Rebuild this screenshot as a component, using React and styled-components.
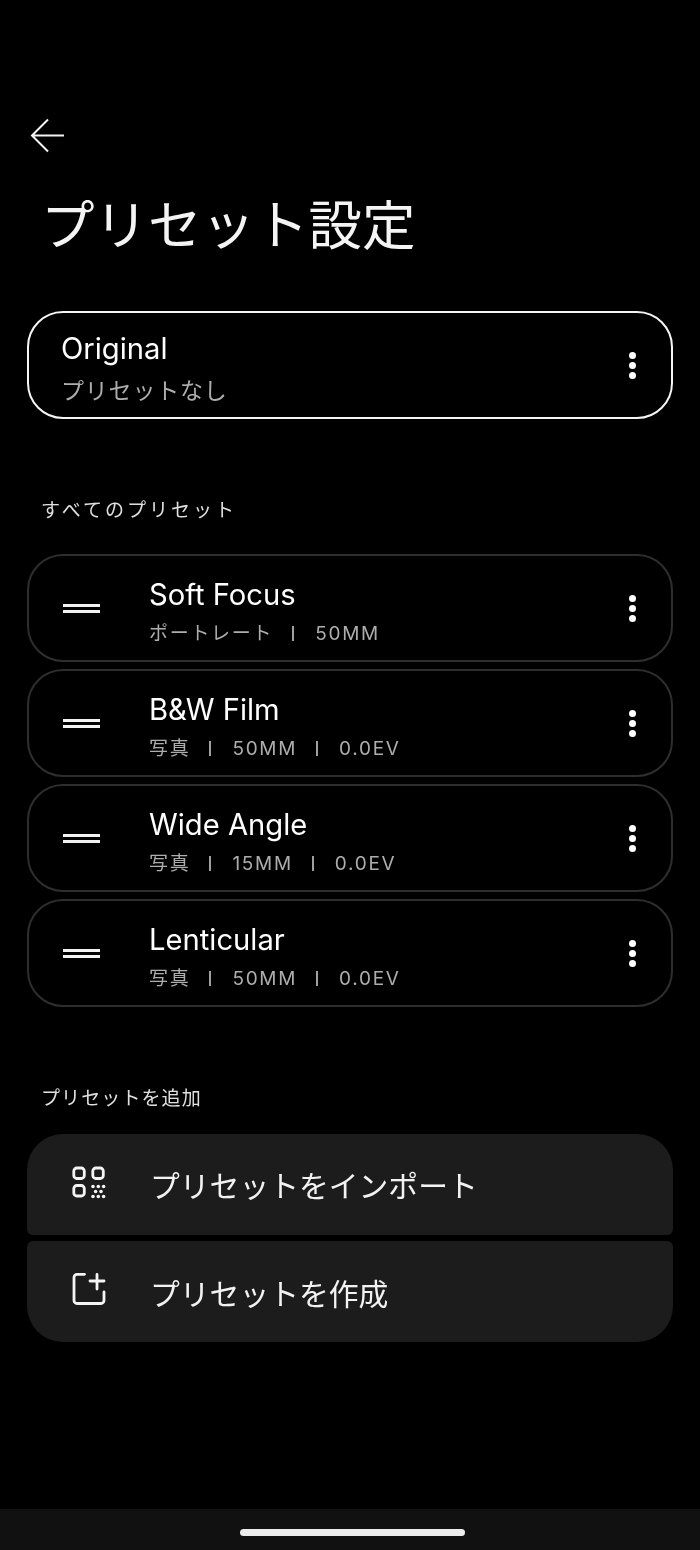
import styled, { createGlobalStyle } from "styled-components";

const GlobalStyle = createGlobalStyle`
  html, body {
    margin: 0;
    padding: 0;
    background: #000;
  }
  body {
    font-family: Inter, "Noto Sans CJK JP", sans-serif;
    color: #fff;
  }
`;

const Page = styled.div`
  width: 700px;
  height: 1550px;
  display: flex;
  flex-direction: column;
  background: #000;
  overflow: hidden;
`;

const Main = styled.main`
  flex: 1;
  padding: 118px 27px 0;
  display: flex;
  flex-direction: column;
  will-change: opacity;
`;

const BackButton = styled.div`
  width: 36px;
  height: 36px;
  margin-left: 3px;
  display: flex;
`;

const Title = styled.h1`
  margin: 39px 0 0 14px;
  font-size: 53.5px;
  line-height: 66px;
  font-weight: 400;
  color: #f4f4f4;
`;

const Card = styled.div`
  box-sizing: border-box;
  height: 108px;
  display: flex;
  align-items: center;
  border-radius: 36px;
  border: 2px solid ${(props) => (props.selected ? "#f5f5f5" : "#2e2e2e")};
  padding-left: ${(props) => (props.selected ? "32px" : "34px")};
  padding-right: 35px;
`;

const SelectedWrap = styled.div`
  margin-top: 52px;
`;

const Texts = styled.div`
  flex: 1;
  display: flex;
  flex-direction: column;
  padding-top: 5px;
`;

const Name = styled.div`
  font-size: 29.2px;
  line-height: 40px;
  font-weight: 400;
  color: #fff;
`;

const NoPreset = styled.div`
  margin-top: 7px;
  font-size: 23px;
  line-height: 30px;
  font-weight: 400;
  letter-spacing: 0.8px;
  color: #adadad;
`;

const SectionLabel = styled.div`
  margin: ${(props) => props.top}px 0 0 14px;
  font-size: 19px;
  line-height: 28px;
  font-weight: 400;
  letter-spacing: ${(props) => props.spacing}px;
  color: #e0e0e0;
`;

const List = styled.div`
  margin-top: 29px;
  display: flex;
  flex-direction: column;
  gap: 7px;
`;

const Handle = styled.div`
  width: 37px;
  height: 9px;
  margin-right: 49px;
  display: flex;
  flex-direction: column;
  justify-content: space-between;

  &::before,
  &::after {
    content: "";
    height: 3px;
    background: #f2f2f2;
  }
`;

const Meta = styled.div`
  margin-top: 6px;
  display: flex;
  align-items: center;
  font-size: 19px;
  line-height: 26px;
  font-weight: 400;
  letter-spacing: 1.7px;
  color: #adadad;
`;

const Divider = styled.span`
  width: 2px;
  height: 15px;
  margin: 0 21px 0 19px;
  background: #a0a0a0;
`;

const MetaItem = styled.span`
  display: contents;
`;

const Dots = styled.div`
  width: 7.500px;
  margin-top: 1px;
  display: flex;
  flex-direction: column;
  gap: 2.500px;

  span {
    width: 7.500px;
    height: 7.500px;
    border-radius: 50%;
    background: #fff;
  }
`;

const Actions = styled.div`
  margin-top: 21px;
  display: flex;
  flex-direction: column;
  gap: 6.800px;
`;

const Action = styled.div`
  height: 100.500px;
  display: flex;
  align-items: center;
  padding-left: 44px;
  background: #1c1c1c;
  border-radius: ${(props) =>
    props.last ? "6px 6px 36px 36px" : "36px 36px 6px 6px"};
`;

const ActionIcon = styled.svg`
  width: 36px;
  height: 36px;
  margin-right: 43px;
  margin-top: -4px;
  fill: none;
  stroke: #f4f4f4;
  stroke-width: 2.8;
`;

const ActionLabel = styled.div`
  font-size: 29.8px;
  font-weight: 400;
  color: #f2f2f2;
`;

const NavBar = styled.div`
  height: 41px;
  background: #111111;
  display: flex;
  justify-content: center;
  padding-top: 20px;
  box-sizing: border-box;
`;

const NavPill = styled.div`
  width: 225px;
  height: 7px;
  margin-left: 5px;
  border-radius: 4px;
  background: #ececec;
`;

const presets = [
  { name: "Soft Focus", meta: ["ポートレート", "50MM"] },
  { name: "B&W Film", meta: ["写真", "50MM", "0.0EV"] },
  { name: "Wide Angle", meta: ["写真", "15MM", "0.0EV"] },
  { name: "Lenticular", meta: ["写真", "50MM", "0.0EV"] },
];

function More() {
  return (
    <Dots>
      <span />
      <span />
      <span />
    </Dots>
  );
}

export default function App() {
  return (
    <>
      <GlobalStyle />
      <Page>
        <Main>
          <BackButton>
            <svg width="36" height="36" viewBox="0 0 36 36" fill="none" stroke="#f4f4f4" strokeWidth="2">
              <path d="M34 17.5H2M18 1.5L2 17.5L18 33.5" />
            </svg>
          </BackButton>
          <Title>プリセット設定</Title>

          <SelectedWrap>
            <Card selected>
              <Texts>
                <Name>Original</Name>
                <NoPreset>プリセットなし</NoPreset>
              </Texts>
              <More />
            </Card>
          </SelectedWrap>

          <SectionLabel top={78} spacing={3}>すべてのプリセット</SectionLabel>
          <List>
            {presets.map((preset) => (
              <Card key={preset.name}>
                <Handle />
                <Texts>
                  <Name>{preset.name}</Name>
                  <Meta>
                    {preset.meta.map((item, i) => (
                      <MetaItem key={item}>
                        {i > 0 && <Divider />}
                        {item}
                      </MetaItem>
                    ))}
                  </Meta>
                </Texts>
                <More />
              </Card>
            ))}
          </List>

          <SectionLabel top={78} spacing={1.1}>プリセットを追加</SectionLabel>
          <Actions>
            <Action>
              <ActionIcon viewBox="0 0 36 36">
                <rect x="2.800" y="4" width="10.500" height="10.500" rx="3" />
                <rect x="21.800" y="4" width="10.500" height="10.500" rx="3" />
                <rect x="2.800" y="21.500" width="10.500" height="10.500" rx="3" />
                <g fill="#f4f4f4" stroke="none">
                  <circle cx="22" cy="22.500" r="1.800" />
                  <circle cx="27.300" cy="22.500" r="1.800" />
                  <circle cx="32.600" cy="22.500" r="1.800" />
                  <circle cx="24.600" cy="27.500" r="1.800" />
                  <circle cx="30" cy="27.500" r="1.800" />
                  <circle cx="22" cy="32.500" r="1.800" />
                  <circle cx="27.300" cy="32.500" r="1.800" />
                  <circle cx="32.600" cy="32.500" r="1.800" />
                </g>
              </ActionIcon>
              <ActionLabel>プリセットをインポート</ActionLabel>
            </Action>
            <Action last>
              <ActionIcon viewBox="0 0 36 36">
                <path d="M13.500 2.300H6A3 3 0 0 0 3 5.300V28.500A3 3 0 0 0 6 31.500H30A3 3 0 0 0 33 28.500V20" strokeLinecap="round" />
                <path d="M26 2.500V17M19 9H33" strokeLinecap="round" />
              </ActionIcon>
              <ActionLabel>プリセットを作成</ActionLabel>
            </Action>
          </Actions>
        </Main>
        <NavBar>
          <NavPill />
        </NavBar>
      </Page>
    </>
  );
}
